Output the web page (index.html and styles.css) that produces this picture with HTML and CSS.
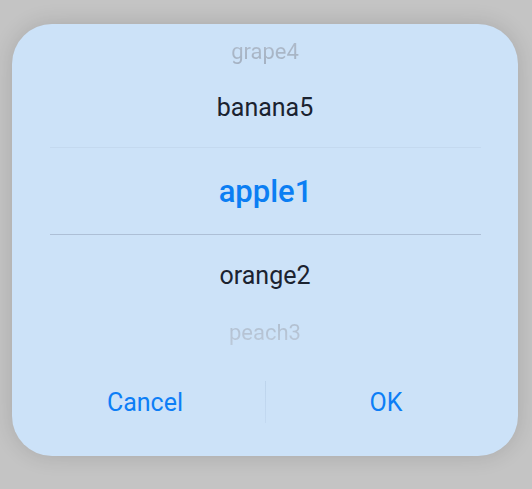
FILE: index.html
```html
<!DOCTYPE html>
<html>
<head>
<meta charset="utf-8">
<link rel="stylesheet" href="styles.css">
</head>
<body>
<div class="dialog">
  <div class="picker">
    <div class="item far top">grape4</div>
    <div class="item near">banana5</div>
    <div class="selected">
      <div class="sel-text">apple1</div>
    </div>
    <div class="item near low">orange2</div>
    <div class="item far bottom">peach3</div>
  </div>
  <div class="actions">
    <div class="btn">Cancel</div>
    <div class="vdiv"></div>
    <div class="btn">OK</div>
  </div>
</div>
</body>
</html>
```
FILE: styles.css
```css
html, body {
  margin: 0;
  padding: 0;
}
body {
  background: #c4c4c4;
  width: 532px;
  height: 489px;
  overflow: hidden;
  font-family: Roboto, "Noto Sans", sans-serif;
}
.dialog {
  margin: 24px 0 0 12px;
  width: 506px;
  height: 432px;
  background: #cce2f8;
  border-radius: 40px;
  box-shadow: 0 0 22px rgba(0, 0, 0, 0.14);
  display: flex;
  flex-direction: column;
}
.picker {
  display: flex;
  flex-direction: column;
}
.item {
  height: 56px;
  display: flex;
  align-items: center;
  justify-content: center;
  font-size: 25px;
  color: #1b2330;
}
.item.low {
  height: 57px;
}
.item.far {
  font-size: 22px;
  color: #a2aebe;
}
.item.top {
  height: 55px;
  color: transparent;
  background: linear-gradient(#b6c2d1, #9eabbc);
  -webkit-background-clip: text;
  background-clip: text;
}
.item.bottom {
  height: 57px;
  color: transparent;
  background: linear-gradient(#a9b6c7, #c2d0e0);
  -webkit-background-clip: text;
  background-clip: text;
}
.selected {
  height: 112px;
  padding: 12px 37px 12px 38px;
  box-sizing: border-box;
  display: flex;
}
.sel-text {
  flex: 1;
  border-top: 1px solid #c4d9ef;
  border-bottom: 1.5px solid #adbfd6;
  display: flex;
  align-items: center;
  justify-content: center;
  font-size: 31px;
  font-weight: 500;
  color: #0b7ef3;
}
.actions {
  margin-top: 20px;
  padding: 0 12px 0 13px;
  display: flex;
  align-items: center;
  height: 42px;
}
.btn {
  flex: 1;
  text-align: center;
  font-size: 25px;
  color: #0d7ef6;
}
.vdiv {
  width: 1px;
  height: 42px;
  background: linear-gradient(#bdd4ec, #c3d9f1);
}
```
